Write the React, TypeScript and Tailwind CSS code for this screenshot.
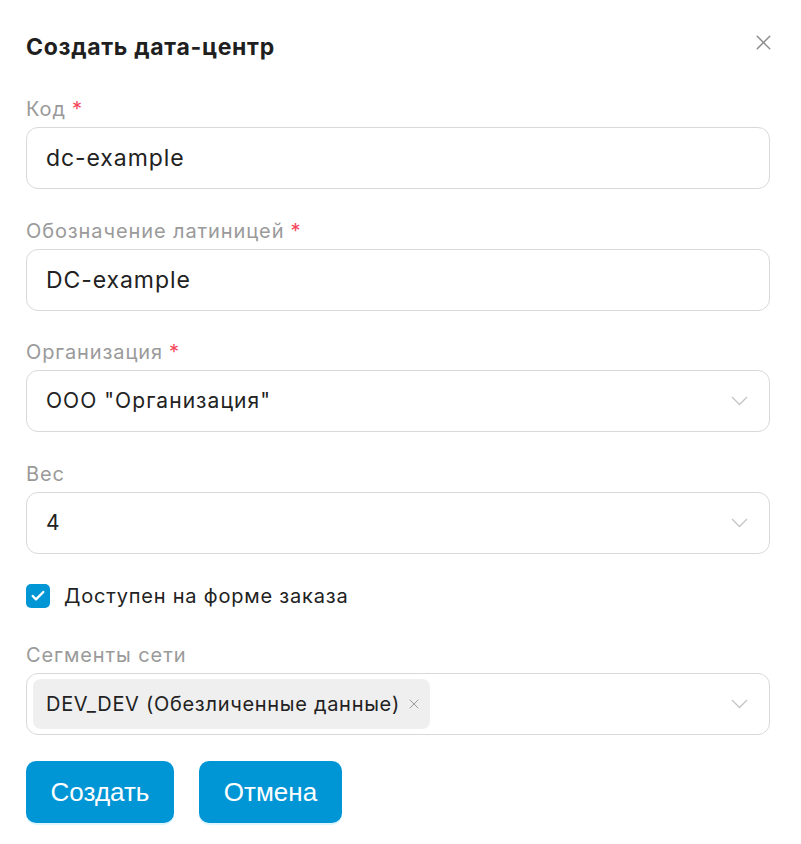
import { Check, X } from 'lucide-react'

const font = { fontFamily: 'Inter, "Noto Sans", sans-serif' }

function Chevron() {
  return (
    <svg width="17" height="10" viewBox="0 0 17 10" fill="none" className="shrink-0">
      <path d="M1 1l7.5 7.5L16 1" stroke="#c4c4c4" strokeWidth="1.3" />
    </svg>
  )
}

function Label({ text, required }: { text: string; required?: boolean }) {
  return (
    <div className="h-6 mb-[9px] text-[20px] leading-[30px] tracking-[0.045em] text-[#9a9a9a]">
      {text}
      {required && <span className="text-[#f5475b] ml-1.5">*</span>}
    </div>
  )
}

function Box({ children, select }: { children: React.ReactNode; select?: boolean }) {
  return (
    <div className="h-[62px] flex items-center border border-[#d9d9d9] rounded-[12px] bg-white pl-[19px] pr-[21px]">
      <div className="flex-1 min-w-0 flex items-center">{children}</div>
      {select && <Chevron />}
    </div>
  )
}

export default function App() {
  return (
    <div className="w-[801px] h-[844px] bg-white pl-[26px] pr-[31px] pt-[32px] text-[#222]" style={font}>
      <div className="flex items-center justify-between h-[31px]">
        <h1 className="text-[23px] font-bold tracking-[0.03em] text-[#1f1f1f]">Создать дата-центр</h1>
        <X className="w-[25px] h-[25px] text-[#8c8c8c] mt-[-10px] mr-[-6px]" strokeWidth={1.4} />
      </div>

      <div className="mt-[31px]">
        <Label text="Код" required />
        <Box><span className="text-[23px] tracking-[0.04em]">dc-example</span></Box>
      </div>

      <div className="mt-[27px]">
        <Label text="Обозначение латиницей" required />
        <Box><span className="text-[23px] tracking-[0.04em]">DC-example</span></Box>
      </div>

      <div className="mt-[26px]">
        <Label text="Организация" required />
        <Box select><span className="text-[21px] tracking-[0.05em]">ООО "Организация"</span></Box>
      </div>

      <div className="mt-[27px]">
        <Label text="Вес" />
        <Box select><span className="text-[21px] tracking-[0.05em]">4</span></Box>
      </div>

      <label className="flex items-center gap-[14px] mt-[30px] h-6">
        <span className="w-6 h-6 rounded-[5px] bg-[#0096d6] flex items-center justify-center">
          <Check className="w-4 h-4 text-white" strokeWidth={3.5} />
        </span>
        <span className="text-[20px] tracking-[0.04em] text-[#222]">Доступен на форме заказа</span>
      </label>

      <div className="mt-[32px]">
        <Label text="Сегменты сети" />
        <div className="h-[62px] flex items-center border border-[#d9d9d9] rounded-[12px] bg-white pl-[6px] pr-[21px]">
          <div className="flex-1">
            <span className="inline-flex items-center h-[50px] rounded-[8px] bg-[#efefef] pl-[13px] pr-[8px] text-[20px] tracking-[0.035em] gap-[6px]">
              DEV_DEV (Обезличенные данные)
              <X className="w-4 h-4 text-[#8c8c8c]" strokeWidth={1.3} />
            </span>
          </div>
          <Chevron />
        </div>
      </div>

      <div className="flex gap-[25px] mt-[26px]" style={{ fontFamily: '"Liberation Sans", Arial, sans-serif' }}>
        <button className="h-[62px] w-[148px] rounded-[10px] bg-[#0096d6] text-white text-[26px] shadow-[0_2px_0_#e0f6ff]">Создать</button>
        <button className="h-[62px] w-[143px] rounded-[10px] bg-[#0096d6] text-white text-[26px] shadow-[0_2px_0_#e0f6ff]">Отмена</button>
      </div>
    </div>
  )
}
